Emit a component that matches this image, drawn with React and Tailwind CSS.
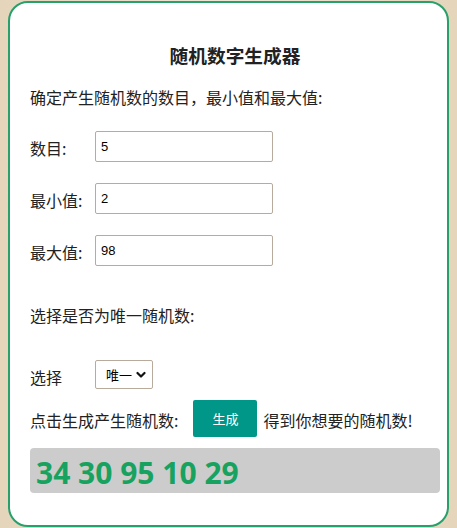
import { useState } from 'react';

const CJK = { fontFamily: '"Microsoft YaHei", "Noto Sans CJK SC", "Noto Sans", sans-serif' };

const FIELDS = [
  { label: '数目:', value: '5' },
  { label: '最小值:', value: '2' },
  { label: '最大值:', value: '98' },
];

export default function App() {
  const [vals, setVals] = useState(FIELDS.map(f => f.value));

  return (
    <div className="min-h-screen bg-gradient-to-r from-[#e4d5bb] via-[#efe6d6] to-[#e4d5bb] px-2 py-px" style={CJK}>
      <div className="h-[526px] bg-white border-2 border-[#28a06b] rounded-[20px] pl-5 pr-[7px] flex flex-col text-[16px] text-[#222]">

        <h3 className="text-center font-bold text-[18.7px] leading-[26px] mt-[39px]">随机数字生成器</h3>

        <p className="leading-6 mt-[17px]">确定产生随机数的数目，最小值和最大值:</p>

        <div className="flex flex-col gap-[21px] mt-[22px]">
          {FIELDS.map((f, i) => (
            <div key={f.label} className="flex items-center h-[31px]">
              <span className="w-[65px] leading-6 pt-[3px]">{f.label}</span>
              <input
                value={vals[i]}
                onChange={e => setVals(v => v.map((x, j) => (j === i ? e.target.value : x)))}
                className="w-[178px] h-[31px] border border-[#b9ab9c] rounded-[2px] px-[5px] text-[13px] text-black outline-none"
                style={{ fontFamily: '"Liberation Sans", Arial, sans-serif' }}
              />
            </div>
          ))}
        </div>

        <p className="leading-6 mt-[37px]">选择是否为唯一随机数:</p>

        <div className="flex items-center h-[29px] mt-[33px]">
          <span className="w-[65px] leading-6 pt-[4px]">选择</span>
          <div className="w-[58px] h-[29px] border border-[#b9ab9c] rounded-[2px] flex items-center pl-[10px] pr-[6px] justify-between text-[13px] text-black">
            <span>唯一</span>
            <svg width="10" height="8" viewBox="0 0 10 8" fill="none" stroke="#111" strokeWidth="2.2" strokeLinecap="round" strokeLinejoin="round">
              <path d="M1.5 2l3.5 3.5L8.5 2" />
            </svg>
          </div>
        </div>

        <div className="flex items-center h-[37px] mt-[11px]">
          <span className="leading-6 pt-[3px]">点击生成产生随机数:</span>
          <button className="ml-[15px] w-[64px] h-[37px] bg-[#009688] text-white text-[13px] rounded-[2px]">生成</button>
          <span className="ml-[6px] leading-6 pt-[3px]">得到你想要的随机数!</span>
        </div>

        <div className="mt-[11px] w-[410px] h-[45px] bg-[#cccccc] rounded-[4px] flex items-center pl-[6px]">
          <span className="text-[30px] font-bold text-[#17a25f] leading-none pt-[4px]" style={{ fontFamily: '"Open Sans", "Noto Sans", sans-serif' }}>
            34 30 95 10 29
          </span>
        </div>
      </div>
    </div>
  );
}
